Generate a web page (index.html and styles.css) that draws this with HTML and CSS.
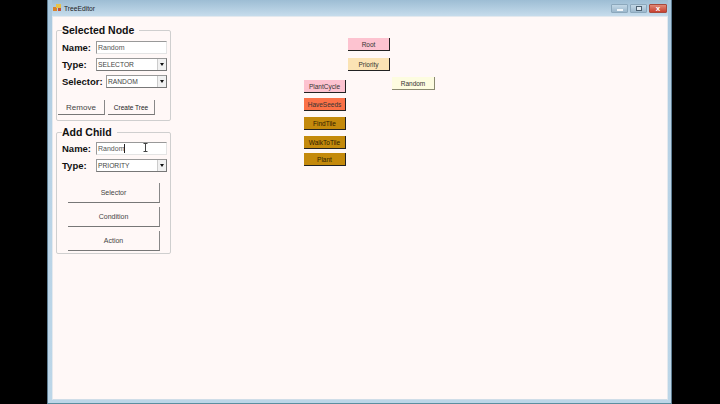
FILE: index.html
```html
<!DOCTYPE html>
<html lang="en">
<head>
    <meta charset="UTF-8">
    <title>TreeEditor</title>
    <link rel="stylesheet" href="styles.css">
</head>
<body>
    <div class="window">
        <div class="titlebar">
            <svg class="app-icon" width="9" height="8" viewBox="0 0 9 8">
                <rect x="0" y="3" width="4" height="4" fill="#d9822b"/>
                <rect x="3" y="0" width="5" height="4" fill="#e8c24a"/>
                <rect x="5" y="4" width="3" height="3" fill="#c0503a"/>
            </svg>
            <span class="title">TreeEditor</span>
            <div class="controls">
                <div class="ctl"><span class="min-glyph"></span></div>
                <div class="ctl"><span class="max-glyph"></span></div>
                <div class="ctl close"><span class="close-glyph">x</span></div>
            </div>
        </div>
        <div class="client">
            <div class="side">
                <fieldset class="group selected-node">
                    <legend>Selected Node</legend>
                    <div class="row">
                        <label>Name:</label>
                        <div class="input name-input">Random</div>
                    </div>
                    <div class="row">
                        <label>Type:</label>
                        <div class="input combo type-combo">SELECTOR<span class="arrow"></span></div>
                    </div>
                    <div class="row">
                        <label class="selector-label">Selector:</label>
                        <div class="input combo selector-combo">RANDOM<span class="arrow"></span></div>
                    </div>
                    <div class="buttons">
                        <div class="btn remove">Remove</div>
                        <div class="btn create">Create Tree</div>
                    </div>
                </fieldset>
                <fieldset class="group add-child">
                    <legend>Add Child</legend>
                    <div class="row">
                        <label>Name:</label>
                        <div class="input name-input">Random<span class="caret"></span></div>
                    </div>
                    <div class="row">
                        <label>Type:</label>
                        <div class="input combo type-combo">PRIORITY<span class="arrow"></span></div>
                    </div>
                    <div class="stack">
                        <div class="btn wide">Selector</div>
                        <div class="btn wide">Condition</div>
                        <div class="btn wide">Action</div>
                    </div>
                </fieldset>
            </div>
            <div class="canvas">
                <div class="node pink n-root">Root</div>
                <div class="node tan n-priority">Priority</div>
                <div class="node cream n-random">Random</div>
                <div class="node pink n-plantcycle">PlantCycle</div>
                <div class="node coral n-haveseeds">HaveSeeds</div>
                <div class="node gold n-findtile">FindTile</div>
                <div class="node gold n-walk">WalkToTile</div>
                <div class="node gold n-plant">Plant</div>
            </div>
            <svg class="ibeam" width="5" height="9" viewBox="0 0 5 9">
                <path d="M0.5 0.5h4M2.5 0.5v8M0.5 8.5h4" stroke="#444" stroke-width="1" fill="none"/>
            </svg>
        </div>
    </div>
</body>
</html>
```

FILE: styles.css
```css
* {
    box-sizing: border-box;
}

body {
    margin: 0;
    width: 720px;
    height: 404px;
    background: #000;
    display: flex;
    justify-content: center;
    overflow: hidden;
    font-family: "Liberation Sans", Arial, sans-serif;
}

.window {
    width: 625px;
    margin-left: -1px;
    height: 404px;
    padding: 0 3px 3px 4px;
    background: linear-gradient(180deg, #a9c8de, #b9d3e6 40%, #bcd6e8);
    border-left: 1px solid #5f7d92;
    border-right: 1px solid #5f7d92;
    border-bottom: 1px solid #5b8fa0;
    display: flex;
    flex-direction: column;
}

.titlebar {
    height: 16px;
    flex: none;
    display: flex;
    align-items: center;
    padding-left: 1px;
    background: linear-gradient(180deg, #9dbdd4, #c6dcec);
}

.app-icon {
    margin-right: 2px;
}

.title {
    font-size: 6.7px;
    color: #222;
}

.controls {
    margin-left: auto;
    margin-right: 1px;
    display: flex;
    gap: 2px;
    align-self: flex-start;
    margin-top: 4px;
}

.ctl {
    width: 17px;
    height: 9px;
    border-radius: 1px;
    border: 1px solid #8ca8bc;
    background: linear-gradient(180deg, #c3d8e7, #9cb8cc);
    display: flex;
    align-items: center;
    justify-content: center;
}

.close {
    width: 18px;
    background: linear-gradient(180deg, #e08a78, #c8402f);
    border-color: #a8493c;
}

.min-glyph {
    width: 6px;
    height: 2px;
    margin-top: 2px;
    background: #f2f6f9;
}

.max-glyph {
    width: 6px;
    height: 5px;
    border: 1px solid #4c6070;
    background: #dfe9f0;
}

.close-glyph {
    font-size: 8px;
    font-weight: bold;
    line-height: 7px;
    color: #fff;
}

.client {
    flex: 1;
    position: relative;
    display: flex;
    background: #fff8f7;
    border: 1px solid #e4e9ee;
    border-bottom-color: #cfdde8;
}

.side {
    width: 121px;
    flex: none;
    margin-left: 3px;
    padding-top: 7px;
    display: flex;
    flex-direction: column;
    gap: 5px;
}

.group {
    margin: 0;
    padding: 3px 0 0 5px;
    border: 1px solid #cfcfcf;
    border-radius: 2px;
    width: 115px;
    min-width: 0;
}

.selected-node {
    height: 97px;
}

.add-child {
    height: 128px;
    padding-top: 2px;
}

.group legend {
    padding: 0 5px 0 0;
    margin-left: 0;
    font-size: 10.5px;
    font-weight: bold;
    line-height: 12px;
    color: #111;
}

.row {
    display: flex;
    align-items: center;
    height: 17px;
}

.row label {
    width: 34px;
    flex: none;
    font-size: 9.5px;
    font-weight: bold;
    color: #111;
}

.row label.selector-label {
    width: 44px;
}

.input {
    position: relative;
    height: 13px;
    width: 71px;
    padding-left: 1px;
    font-size: 7px;
    line-height: 12px;
    color: #555;
    background: #fff;
    border: 1px solid #999;
    border-bottom-color: #e4e4e4;
    border-right-color: #e4e4e4;
}

.selector-combo {
    width: 61px;
}

.combo {
    font-size: 6.7px;
    color: #444;
    border-color: #999;
    border-bottom-color: #777;
    border-right-color: #777;
}

.arrow {
    position: absolute;
    top: 0;
    right: 0;
    width: 9px;
    height: 11px;
    background: #f1f1f1;
    border-left: 1px solid #ccc;
}

.arrow::after {
    content: "";
    position: absolute;
    left: 2px;
    top: 4px;
    border-left: 2px solid transparent;
    border-right: 2px solid transparent;
    border-top: 3px solid #111;
}

.caret {
    display: inline-block;
    width: 1px;
    height: 9px;
    background: #222;
    vertical-align: -2px;
}

.buttons {
    display: flex;
    gap: 3px;
    margin: 10px 0 0 -4px;
}

.btn {
    height: 15px;
    display: flex;
    align-items: center;
    justify-content: center;
    font-size: 7px;
    color: #444;
    border-right: 1px solid #888;
    border-bottom: 1px solid #777;
}

.remove {
    width: 47px;
    font-size: 8px;
}

.create {
    width: 47px;
    font-size: 6.5px;
    color: #222;
}

.stack {
    display: flex;
    flex-direction: column;
    gap: 4px;
    margin: 9px 0 0 6px;
}

.wide {
    width: 92px;
    height: 20px;
}

.canvas {
    flex: 1;
    position: relative;
}

.node {
    position: absolute;
    width: 42px;
    height: 13px;
    display: flex;
    align-items: center;
    justify-content: center;
    font-size: 6.5px;
    color: #333;
    border-right: 1px solid #222;
    border-bottom: 1px solid #222;
}

.pink {
    background: #fdc3d0;
}

.tan {
    background: #fbe3b4;
}

.cream {
    background: #fdfce0;
    width: 43px;
    border-right-color: #8a8a70;
    border-bottom-color: #8a8a70;
}

.coral {
    background: #fb7147;
}

.gold {
    background: #c48a0c;
    color: #2e1c00;
}

.n-root { left: 171px; top: 21px; }
.n-priority { left: 171px; top: 41px; }
.n-random { left: 215px; top: 60px; }
.n-plantcycle { left: 127px; top: 63px; }
.n-haveseeds { left: 127px; top: 81px; }
.n-findtile { left: 127px; top: 100px; }
.n-walk { left: 127px; top: 119px; }
.n-plant { left: 127px; top: 136px; }

.ibeam {
    position: absolute;
    left: 90px;
    top: 126px;
}
```
